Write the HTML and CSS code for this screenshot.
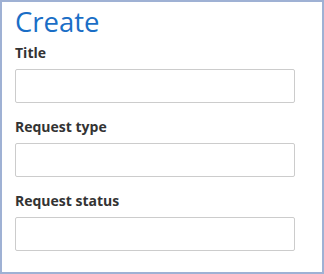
FILE: index.html
```html
<!DOCTYPE html>
<html>
<head>
<meta charset="utf-8">
<link rel="stylesheet" href="styles.css">
</head>
<body>
<div class="panel">
  <h1 class="title">Create</h1>
  <div class="field">
    <label class="label">Title</label>
    <div class="input"></div>
  </div>
  <div class="field">
    <label class="label">Request type</label>
    <div class="input"></div>
  </div>
  <div class="field">
    <label class="label">Request status</label>
    <div class="input"></div>
  </div>
</div>
</body>
</html>
```
FILE: styles.css
```css
html, body {
  margin: 0;
  padding: 0;
  background: #fff;
}
.panel {
  box-sizing: border-box;
  width: 324px;
  height: 274px;
  border: 2px solid #9fb1d4;
  padding: 4px 27px 0 13px;
  font-family: "Open Sans", sans-serif;
  display: flex;
  flex-direction: column;
}
.title {
  margin: 0;
  font-size: 27.5px;
  line-height: 32px;
  font-weight: 400;
  color: #1a6ec6;
}
.field {
  display: flex;
  flex-direction: column;
  margin-top: 6px;
}
.field + .field {
  margin-top: 15px;
}
.label {
  font-size: 14px;
  line-height: 18px;
  font-weight: 700;
  color: #333;
  margin: 0 0 7px 0;
}
.input {
  box-sizing: border-box;
  height: 34px;
  border: 1px solid #cccccc;
  border-radius: 2px;
  background: #fff;
}
```
